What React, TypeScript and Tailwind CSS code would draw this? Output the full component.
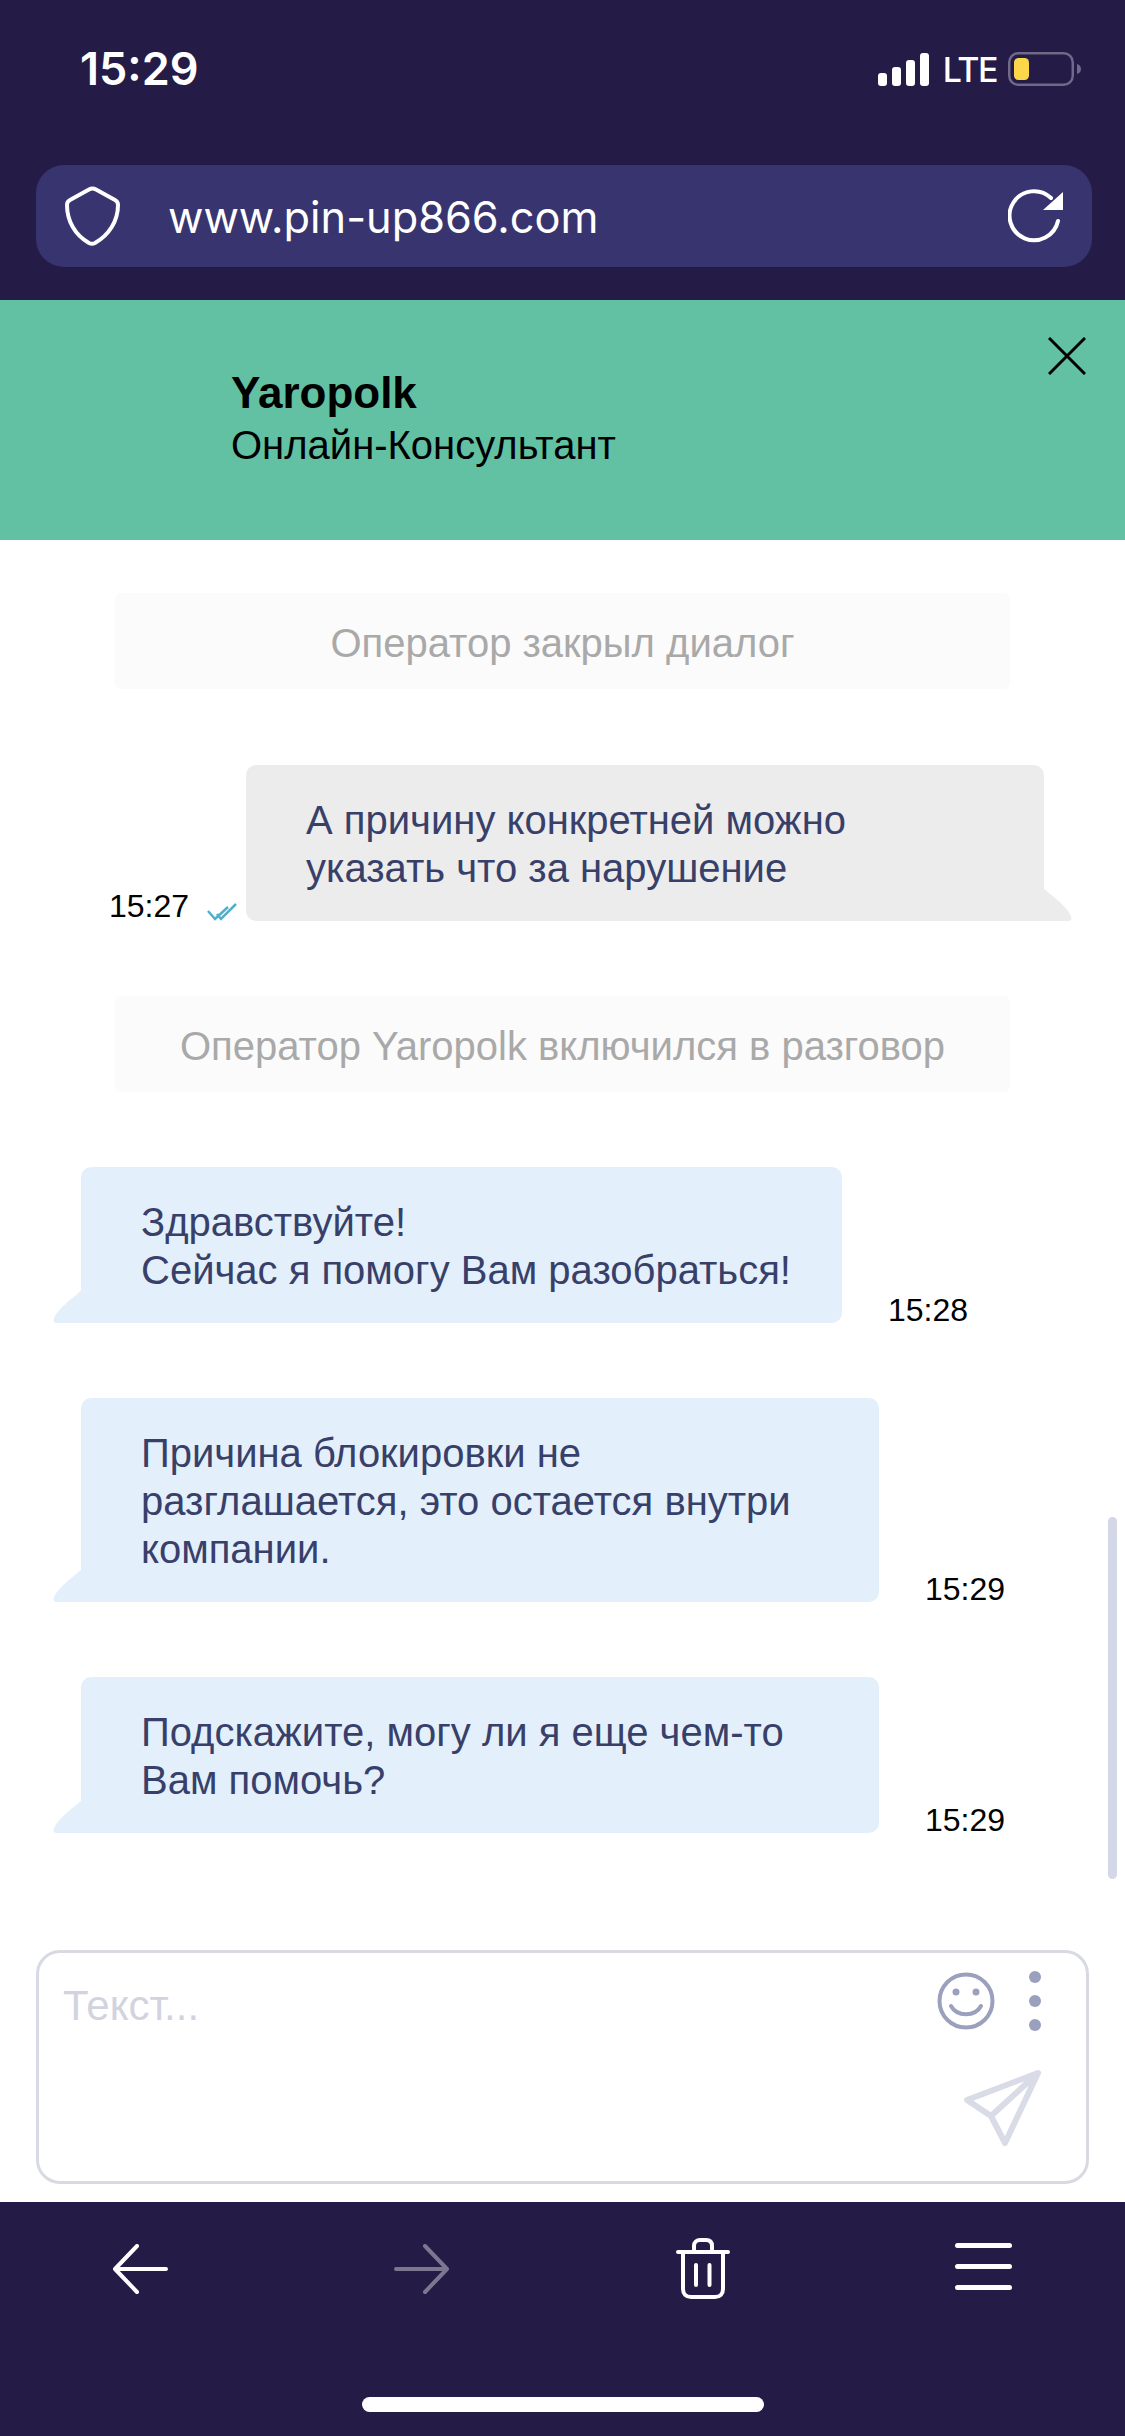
const sans = { fontFamily: '"Liberation Sans", Arial, sans-serif' };
const inter = { fontFamily: "Inter, sans-serif" };

function SignalBars() {
  return (
    <svg width="52" height="33" viewBox="0 0 52 33" fill="#fff">
      <rect x="0" y="20" width="9" height="13" rx="3" />
      <rect x="14" y="14" width="9" height="19" rx="3" />
      <rect x="28" y="7" width="9" height="26" rx="3" />
      <rect x="42" y="0" width="9" height="33" rx="3" />
    </svg>
  );
}

function Battery() {
  return (
    <svg width="74" height="34" viewBox="0 0 74 34">
      <rect x="1.25" y="1.25" width="63.5" height="31.5" rx="9" fill="none" stroke="#6f6a88" strokeWidth="2.5" />
      <rect x="6" y="6" width="15" height="22" rx="4.5" fill="#fbd84a" />
      <path d="M69 12c2.500.6 4 2.600 4 5s-1.500 4.400-4 5z" fill="#6f6a88" />
    </svg>
  );
}

function SystemNote({ text }: { text: string }) {
  return (
    <div className="mx-[115px] flex h-[96px] items-center justify-center rounded-[6px] bg-[#fbfbfb] pt-[3px] text-[40px] text-[#a9a9a9]">
      {text}
    </div>
  );
}

function OperatorMessage({ lines, width, time, className }: { lines: string[]; width: string; time: string; className: string }) {
  return (
    <div className={`ml-[81px] flex items-end ${className}`}>
      <div className={`relative rounded-[10px] rounded-bl-none bg-[#e3f0fb] pb-[29px] pl-[60px] pt-[31px] text-[40px] leading-[48px] text-[#38406a] ${width}`}>
        <svg className="absolute bottom-0 left-[-28px]" width="29" height="33" viewBox="0 0 29 33" fill="#e3f0fb">
          <path d="M29 0C18 10 6 17 1 28c-1 3 0 5 3 5h25z" />
        </svg>
        {lines.map((line) => (
          <div key={line}>{line}</div>
        ))}
      </div>
      <span className="mb-[-6px] ml-[46px] text-[32px] leading-[37px] text-black">{time}</span>
    </div>
  );
}

export default function App() {
  return (
    <div className="relative flex h-[2436px] w-[1125px] flex-col overflow-hidden bg-white" style={sans}>
      <div className="h-[300px] shrink-0 bg-[#241b47] text-white">
        <div className="flex h-[34px] translate-y-[52px] items-center pl-[80px] pr-[43px]">
          <span className="text-[45px] font-semibold" style={inter}>15:29</span>
          <div className="ml-auto flex items-center">
            <SignalBars />
            <span className="ml-[13px] text-[34px] font-medium tracking-[-1.5px]" style={inter}>LTE</span>
            <div className="ml-[11px]">
              <Battery />
            </div>
          </div>
        </div>
        <div className="ml-[36px] mr-[33px] mt-[131px] flex h-[102px] items-center rounded-[28px] bg-[#383470] pl-[29px] pr-[29px]">
          <svg width="55" height="60" viewBox="0 0 55 60" fill="none" stroke="#fff" strokeWidth="4" strokeLinejoin="round">
            <path d="M24 3.500c2-1.200 5-1.200 7 0l19 10.500c2 1 3 2.500 3 5 0 16-9 30-23 38-2 1-4 1-6 0C10 49 2 35 2 19c0-2.500 1-4 3-5z" />
          </svg>
          <span className="ml-[48px] pt-[2px] text-[43.300px]" style={inter}>www.pin-up866.com</span>
          <svg className="ml-auto" width="55" height="54" viewBox="0 0 55 54" fill="none" stroke="#fff" strokeWidth="4" strokeLinecap="round">
            <path d="M50 32A24.500 24.500 0 1 1 43 9" />
            <path d="M55 3v18H35z" fill="#fff" stroke="none" />
          </svg>
        </div>
      </div>

      <div className="relative h-[240px] shrink-0 bg-[#62c1a3] pl-[231px] pt-[64px] text-black">
        <div className="text-[44px] font-bold leading-[58px]">Yaropolk</div>
        <div className="mt-[-2px] text-[40px] leading-[50px]">Онлайн-Консультант</div>
        <svg className="absolute right-[39px] top-[37px]" width="38" height="38" viewBox="0 0 38 38" stroke="#000" strokeWidth="3">
          <path d="M1 1l36 36M37 1 1 37" />
        </svg>
      </div>

      <div className="relative min-h-0 flex-1 pt-[53px]">
        <SystemNote text="Оператор закрыл диалог" />

        <div className="mt-[76px] flex items-end pl-[109px]">
          <span className="mb-[-4px] text-[32px] leading-[37px] text-black">15:27</span>
          <svg className="ml-[18px]" width="30" height="18" viewBox="0 0 30 18" fill="none" stroke="#4fb0c9" strokeWidth="2.500">
            <path d="M1 8l7 8L21 4M10 11l4 5L29 1" />
          </svg>
          <div className="relative ml-[9px] h-[156px] w-[798px] rounded-[10px] rounded-br-none bg-[#ececec] pl-[60px] pt-[31px] text-[40px] leading-[48px] text-[#38406a]">
            <div>А причину конкретней можно</div>
            <div>указать что за нарушение</div>
            <svg className="absolute bottom-0 right-[-28px]" width="29" height="33" viewBox="0 0 29 33" fill="#ececec">
              <path d="M0 0c11 10 23 17 28 28 1 3 0 5-3 5H0z" />
            </svg>
          </div>
        </div>

        <div className="mt-[75px]">
          <SystemNote text="Оператор Yaropolk включился в разговор" />
        </div>

        <OperatorMessage className="mt-[75px]" width="w-[761px]" time="15:28" lines={["Здравствуйте!", "Сейчас я помогу Вам разобраться!"]} />
        <OperatorMessage className="mt-[75px]" width="w-[798px]" time="15:29" lines={["Причина блокировки не", "разглашается, это остается внутри", "компании."]} />
        <OperatorMessage className="mt-[75px]" width="w-[798px]" time="15:29" lines={["Подскажите, могу ли я еще чем-то", "Вам помочь?"]} />

        <div className="absolute right-[8px] top-[977px] h-[362px] w-[9px] rounded-full bg-[#d4d7e8]" />
      </div>

      <div className="absolute left-[36px] top-[1950px] h-[234px] w-[1053px] rounded-[24px] border-[3px] border-[#d8dae3] bg-white">
        <span className="absolute left-[24px] top-[31px] text-[42px] leading-[44px] text-[#d2d3df]">Текст...</span>
        <svg className="absolute right-[91px] top-[19px]" width="58" height="58" viewBox="0 0 58 58" fill="none" stroke="#9ba0bd" strokeWidth="4">
          <circle cx="29" cy="29" r="26.500" />
          <circle cx="19" cy="20" r="3.500" fill="#9ba0bd" stroke="none" />
          <circle cx="39" cy="20" r="3.500" fill="#9ba0bd" stroke="none" />
          <path d="M14 34c6 11 24 11 30 0" strokeLinecap="round" />
        </svg>
        <div className="absolute right-[45px] top-[18px] flex flex-col gap-[12px]">
          <span className="h-[12px] w-[12px] rounded-full bg-[#9ba0bd]" />
          <span className="h-[12px] w-[12px] rounded-full bg-[#9ba0bd]" />
          <span className="h-[12px] w-[12px] rounded-full bg-[#9ba0bd]" />
        </div>
        <svg className="absolute right-[43px] top-[115px]" width="80" height="80" viewBox="0 0 80 80" fill="none" stroke="#d9dce6" strokeWidth="6" strokeLinejoin="round">
          <path d="M75 5 4 32l24 16 14 27zM75 5 28 48" />
        </svg>
      </div>

      <div className="relative h-[234px] shrink-0 bg-[#241b47]">
        <svg className="absolute left-[112px] top-[42px]" width="56" height="50" viewBox="0 0 56 50" fill="none" stroke="#fff" strokeWidth="4" strokeLinecap="round" strokeLinejoin="round">
          <path d="M25 2 3 25l22 23M3 25h51" />
        </svg>
        <svg className="absolute left-[394px] top-[42px]" width="56" height="50" viewBox="0 0 56 50" fill="none" stroke="#7c7690" strokeWidth="4" strokeLinecap="round" strokeLinejoin="round">
          <path d="M31 2l22 23-22 23M53 25H2" />
        </svg>
        <svg className="absolute left-[676px] top-[35px]" width="54" height="62" viewBox="0 0 54 62" fill="none" stroke="#fff" strokeWidth="4" strokeLinecap="round">
          <path d="M2 15h50M7 15v37c0 5 3 8 8 8h24c5 0 8-3 8-8V15M18 15V9c0-4 3-6 6-6h6c4 0 6 2 6 6v6M20 28v20M33.500 28v20" />
        </svg>
        <div className="absolute left-[955px] top-[41px] flex flex-col gap-[16px]">
          <span className="h-[5px] w-[57px] rounded-full bg-white" />
          <span className="h-[5px] w-[57px] rounded-full bg-white" />
          <span className="h-[5px] w-[57px] rounded-full bg-white" />
        </div>
        <div className="absolute bottom-[24px] left-[362px] h-[15px] w-[402px] rounded-full bg-white" />
      </div>
    </div>
  );
}
